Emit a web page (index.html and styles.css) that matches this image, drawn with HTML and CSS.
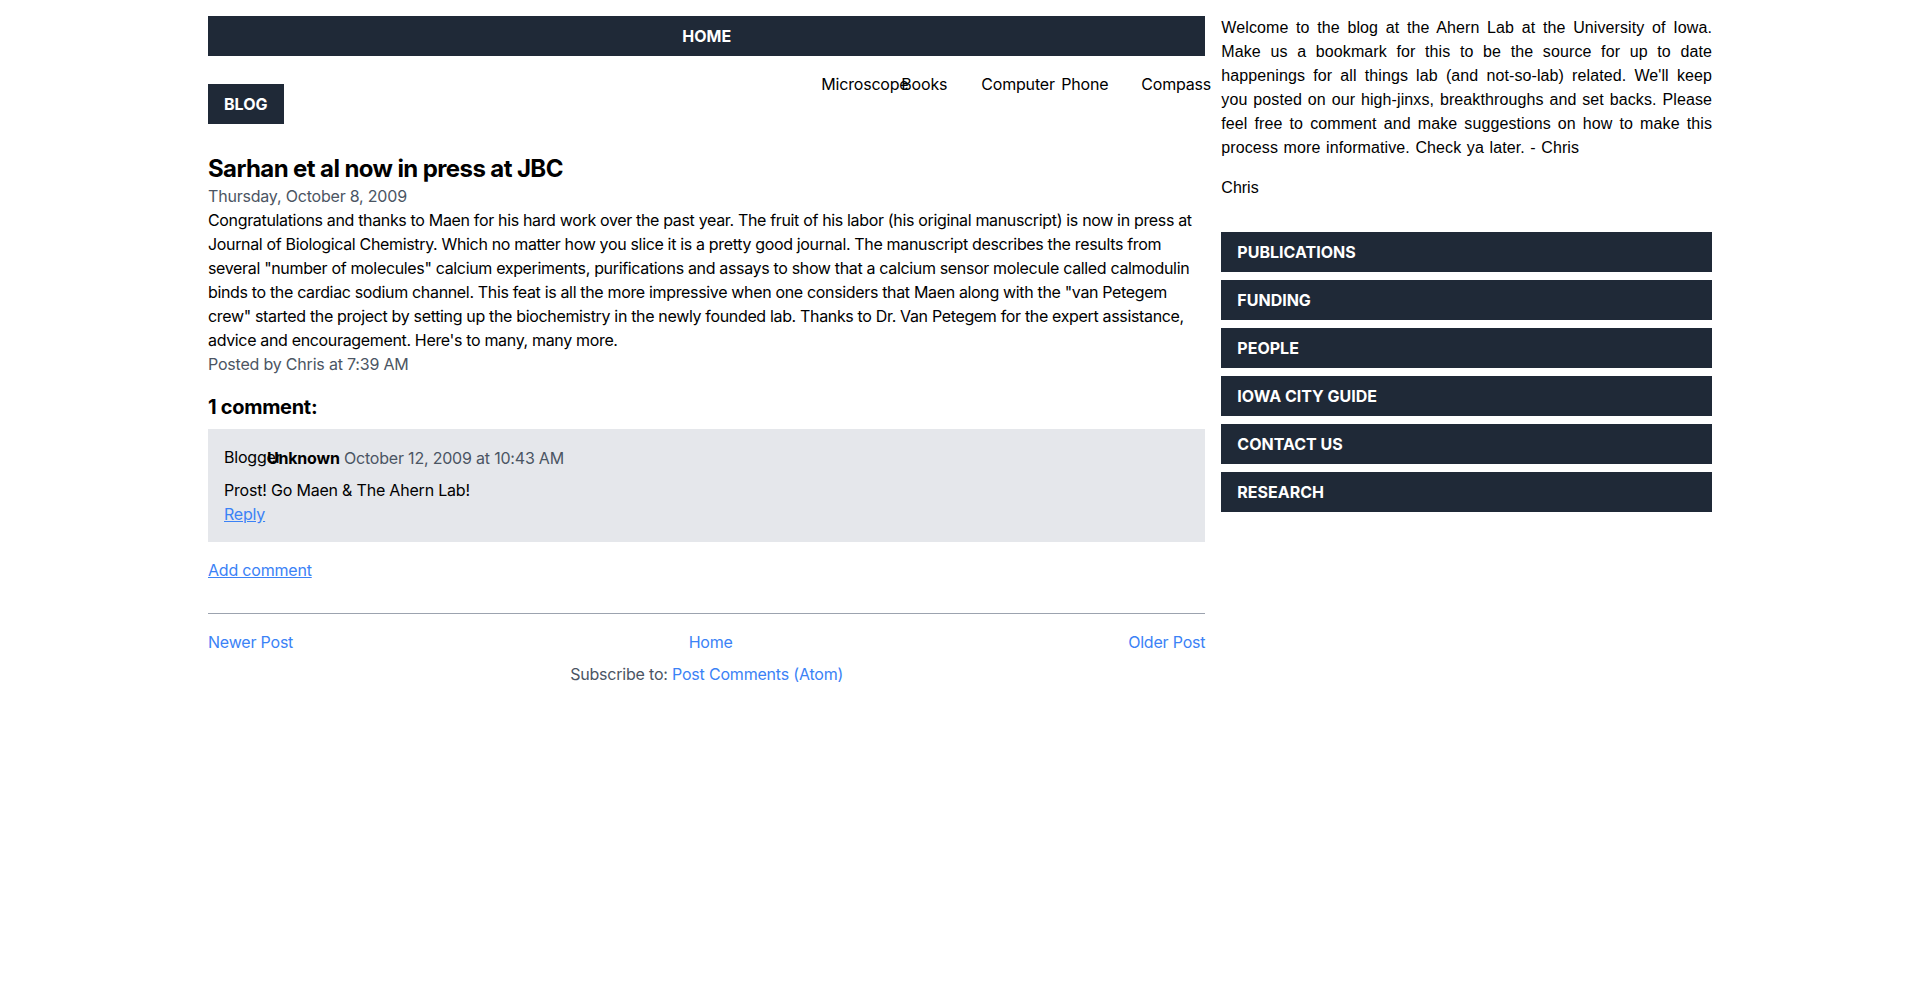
FILE: index.html
```html
<!DOCTYPE html>
<html lang="en">
<head>
<meta charset="utf-8">
<title>Ahern Lab Blog: Sarhan et al now in press at JBC</title>
<link rel="stylesheet" href="styles.css">
</head>
<body>
<div class="page">
  <main class="main">
    <a class="home-bar" href="#">HOME</a>
    <div class="subnav">
      <a class="blog-btn" href="#">BLOG</a>
      <ul class="tools">
        <li>Microscope</li>
        <li>Books</li>
        <li>Computer</li>
        <li>Phone</li>
        <li>Compass</li>
      </ul>
    </div>

    <article class="post">
      <h1 class="post-title">Sarhan et al now in press at JBC</h1>
      <div class="meta">Thursday, October 8, 2009</div>
      <p class="post-body">Congratulations and thanks to Maen for his hard work over the past year. The fruit of his labor (his original manuscript) is now in press at Journal of Biological Chemistry. Which no matter how you slice it is a pretty good journal. The manuscript describes the results from several "number of molecules" calcium experiments, purifications and assays to show that a calcium sensor molecule called calmodulin binds to the cardiac sodium channel. This feat is all the more impressive when one considers that Maen along with the "van Petegem crew" started the project by setting up the biochemistry in the newly founded lab. Thanks to Dr. Van Petegem for the expert assistance, advice and encouragement. Here's to many, many more.</p>
      <div class="meta">Posted by Chris at 7:39 AM</div>
    </article>

    <section class="comments">
      <h2 class="comments-title">1 comment:</h2>
      <div class="comment">
        <div class="comment-head">
          <span class="avatar">Blogger</span><span class="author">Unknown</span> <span class="comment-date">October 12, 2009 at 10:43 AM</span>
        </div>
        <p class="comment-body">Prost! Go Maen &amp; The Ahern Lab!</p>
        <a class="link" href="#">Reply</a>
      </div>
      <a class="link add-comment" href="#">Add comment</a>
    </section>

    <hr class="divider">
    <nav class="pager">
      <a href="#">Newer Post</a>
      <a href="#">Home</a>
      <a href="#">Older Post</a>
    </nav>
    <div class="subscribe">Subscribe to: <a href="#">Post Comments (Atom)</a></div>
  </main>

  <aside class="sidebar">
    <p class="intro">Welcome to the blog at the Ahern Lab at the University of Iowa. Make us a bookmark for this to be the source for up to date happenings for all things lab (and not-so-lab) related. We'll keep you posted on our high-jinxs, breakthroughs and set backs. Please feel free to comment and make suggestions on how to make this process more informative. Check ya later. - Chris</p>
    <p class="sig">Chris</p>
    <ul class="side-menu">
      <li><a href="#">PUBLICATIONS</a></li>
      <li><a href="#">FUNDING</a></li>
      <li><a href="#">PEOPLE</a></li>
      <li><a href="#">IOWA CITY GUIDE</a></li>
      <li><a href="#">CONTACT US</a></li>
      <li><a href="#">RESEARCH</a></li>
    </ul>
  </aside>
</div>
</body>
</html>
```

FILE: styles.css
```css
* { box-sizing: border-box; }

html, body {
  margin: 0;
  padding: 0;
  background: #ffffff;
}

body {
  font-family: Inter, "Noto Sans", sans-serif;
  font-size: 16px;
  line-height: 24px;
  color: #000000;
}

a { text-decoration: none; color: inherit; }

.page {
  width: 1504px;
  margin: 0 auto;
  padding-top: 16px;
  display: grid;
  grid-template-columns: repeat(3, minmax(0, 1fr));
  column-gap: 16px;
  align-items: start;
}

.main {
  grid-column: span 2;
  min-width: 0;
  letter-spacing: -0.2px;
}

.home-bar {
  display: block;
  background: #1f2937;
  color: #ffffff;
  font-weight: 700;
  text-align: center;
  padding: 8px 16px;
  height: 40px;
  letter-spacing: 0;
}

.subnav {
  display: flex;
  justify-content: space-between;
  align-items: flex-start;
  margin-top: 16px;
}

.blog-btn {
  display: block;
  margin-top: 12px;
  background: #1f2937;
  color: #ffffff;
  font-weight: 700;
  padding: 8px 16px;
  letter-spacing: 0;
}

.tools {
  list-style: none;
  margin: 0;
  padding: 0;
  display: flex;
  gap: 16px;
}

.tools li {
  width: 64px;
  white-space: nowrap;
}

.post { margin-top: 30px; }

.post-title {
  margin: 0;
  font-size: 24px;
  line-height: 30px;
  font-weight: 700;
  letter-spacing: -0.6px;
}

.meta { color: #4b5563; }

.post-body {
  margin: 0;
  letter-spacing: -0.34px;
}

.comments { margin-top: 17px; }

.comments-title {
  margin: 0 0 8px;
  font-size: 20px;
  line-height: 28px;
  font-weight: 700;
  letter-spacing: -0.3px;
}

.comment {
  background: #e5e7eb;
  padding: 16px;
}

.comment-head { white-space: nowrap; }

.avatar {
  display: inline-block;
  width: 36px;
  margin-right: 7px;
  overflow: visible;
  vertical-align: 1px;
}

.author { font-weight: 700; }

.comment-date { color: #4b5563; }

.comment-body { margin: 8px 0 0; }

.link {
  color: #3b82f6;
  text-decoration: underline;
}

.add-comment {
  display: inline-block;
  margin-top: 16px;
}

.divider {
  border: 0;
  border-top: 1px solid #9ca3af;
  margin: 31px 0 16px;
}

.pager {
  display: flex;
  justify-content: space-between;
}

.pager a,
.subscribe a { color: #3b82f6; }

.subscribe {
  margin-top: 8px;
  text-align: center;
  color: #4b5563;
}

.sidebar { min-width: 0; }

.intro {
  margin: 0;
  font-family: "Liberation Sans", Arial, sans-serif;
  letter-spacing: 0.1px;
  word-spacing: 1px;
  text-align: justify;
}

.sig {
  margin: 16px 0 0;
  font-family: "Liberation Sans", Arial, sans-serif;
}

.side-menu {
  list-style: none;
  margin: 32px 0 0;
  padding: 0;
  display: flex;
  flex-direction: column;
  gap: 8px;
}

.side-menu a {
  display: block;
  height: 40px;
  padding: 8px 16px;
  background: #1f2937;
  color: #ffffff;
  font-weight: 700;
}
```
